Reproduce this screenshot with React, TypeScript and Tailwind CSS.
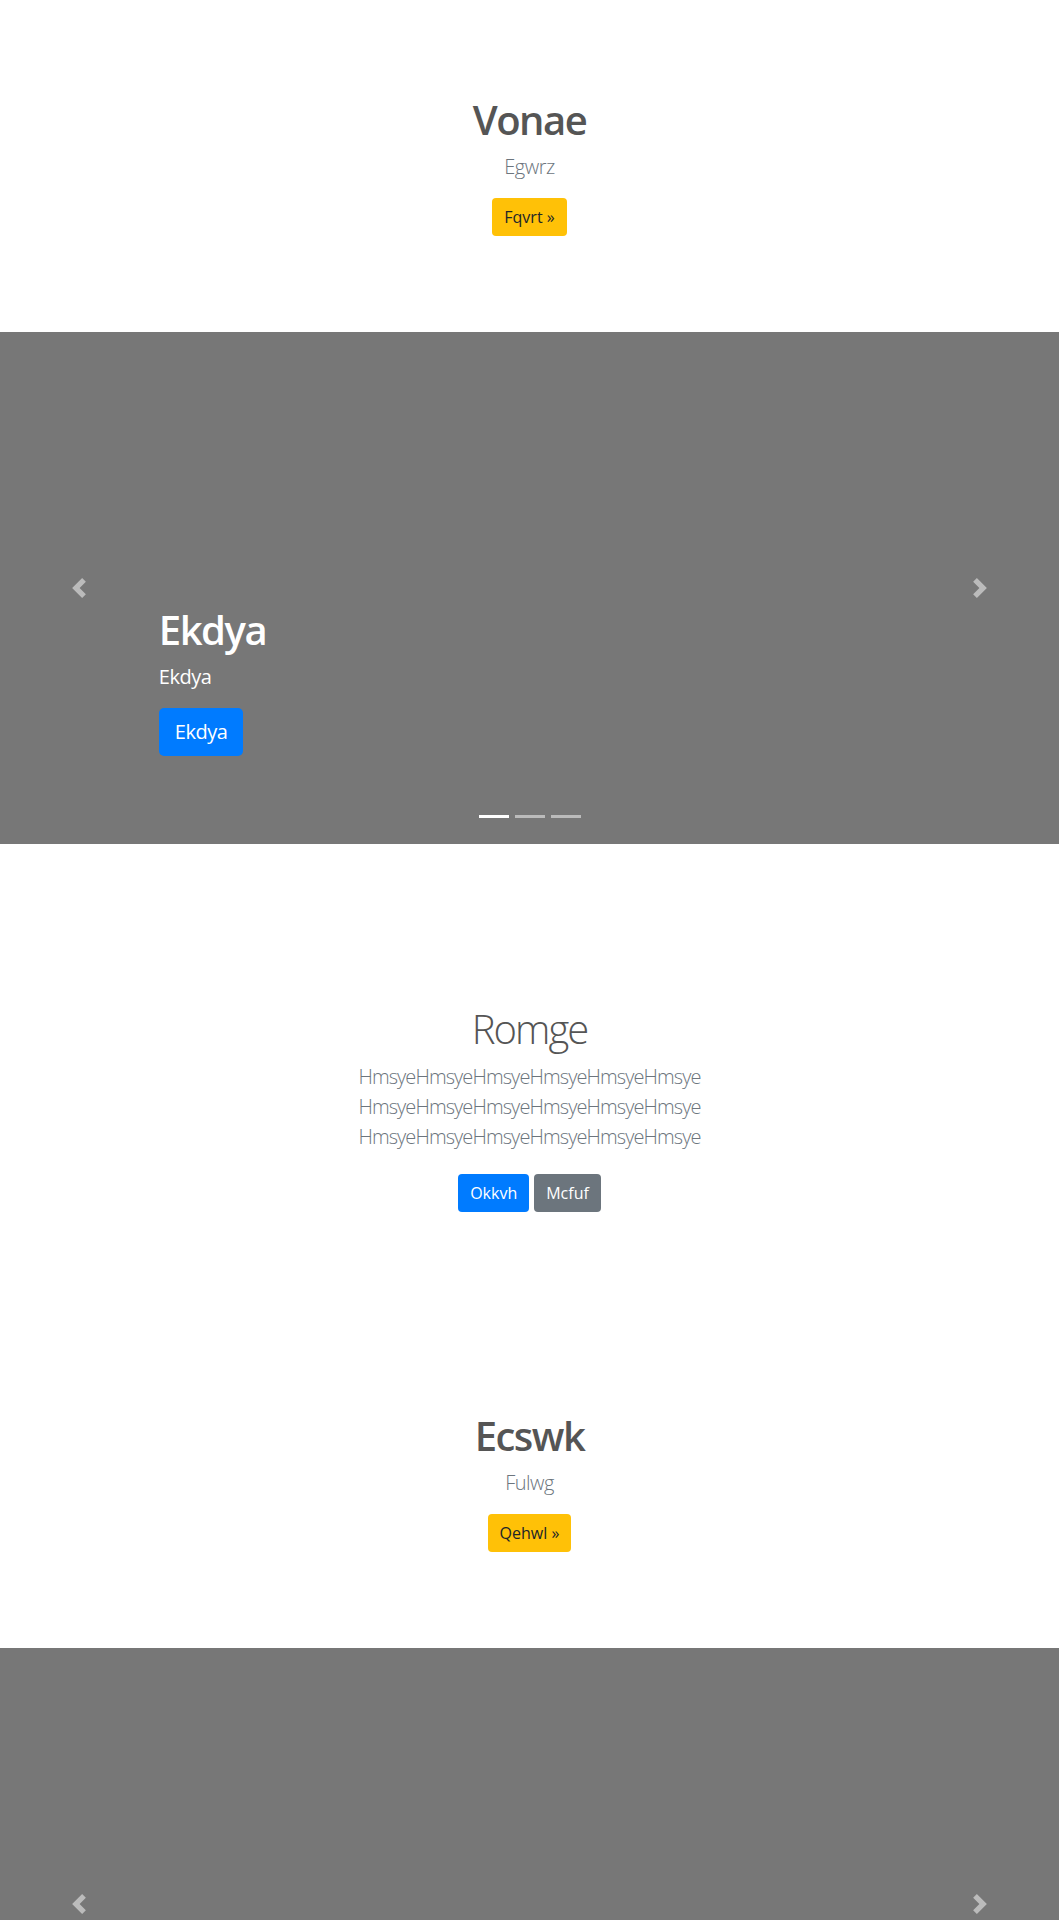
import React from 'react';

const font = { fontFamily: '"Open Sans", "Noto Sans", Arial, sans-serif' };

const PrevIcon = () => (
  <svg viewBox="0 0 8 8" className="w-5 h-5" fill="#fff">
    <path d="M5.25 0l-4 4 4 4 1.5-1.5L4.25 4l2.5-2.5L5.25 0z" />
  </svg>
);

const NextIcon = () => (
  <svg viewBox="0 0 8 8" className="w-5 h-5" fill="#fff">
    <path d="M2.75 0l-1.5 1.5L3.75 4l-2.5 2.5L2.75 8l4-4-4-4z" />
  </svg>
);

interface HeroProps {
  title: string;
  lead: string;
  action: string;
}

const Hero = ({ title, lead, action }: HeroProps) => (
  <section className="py-24 text-center">
    <h1 className="text-[40px] leading-[48px] font-semibold tracking-[-1.5px] text-[#555] mb-2">{title}</h1>
    <p className="text-[20px] leading-[30px] font-light tracking-[-0.5px] text-[#6c757d] mb-4">{lead}</p>
    <button className="h-[38px] px-3 rounded bg-[#ffc107] text-[#212529] text-base leading-6">
      {action} &raquo;
    </button>
  </section>
);

interface SlideProps {
  title?: string;
  text?: string;
  action?: string;
}

const Carousel = ({ title, text, action }: SlideProps) => (
  <section className="relative h-[512px] bg-[#777] overflow-hidden">
    {/* Caption */}
    {title && (
      <div className="absolute left-[15%] right-[15%] bottom-[52px] py-5 text-left text-white">
        <h1 className="text-[40px] leading-[48px] font-semibold tracking-[-1.5px] mb-2">{title}</h1>
        <p className="text-[20px] leading-[30px] tracking-[-0.5px] mb-4">{text}</p>
        <p className="mb-4">
          <button className="h-12 px-4 rounded-[5px] bg-[#007bff] text-white text-[20px] leading-[30px] tracking-[-0.5px]">
            {action}
          </button>
        </p>
      </div>
    )}

    {/* Controls */}
    <button className="absolute inset-y-0 left-0 w-[15%] flex items-center justify-center opacity-50">
      <PrevIcon />
    </button>
    <button className="absolute inset-y-0 right-0 w-[15%] flex items-center justify-center opacity-50">
      <NextIcon />
    </button>

    {/* Indicators */}
    <ol className="absolute bottom-0 inset-x-0 mx-[15%] mb-4 flex justify-center">
      <li className="w-[30px] h-[23px] mx-[3px] border-y-[10px] border-transparent bg-white bg-clip-padding" />
      <li className="w-[30px] h-[23px] mx-[3px] border-y-[10px] border-transparent bg-white bg-clip-padding opacity-50" />
      <li className="w-[30px] h-[23px] mx-[3px] border-y-[10px] border-transparent bg-white bg-clip-padding opacity-50" />
    </ol>
  </section>
);

export default function App() {
  const lines = ['HmsyeHmsyeHmsyeHmsyeHmsyeHmsye', 'HmsyeHmsyeHmsyeHmsyeHmsyeHmsye', 'HmsyeHmsyeHmsyeHmsyeHmsyeHmsye'];

  return (
    <div className="bg-white" style={font}>
      <Hero title="Vonae" lead="Egwrz" action="Fqvrt" />

      <Carousel title="Ekdya" text="Ekdya" action="Ekdya" />

      {/* Feature block */}
      <section className="pt-[161px] pb-[104px] text-center">
        <h1 className="text-[40px] leading-[48px] font-light tracking-[-2px] text-[#555] mb-[9px]">Romge</h1>
        <p className="text-[20px] leading-[30px] font-light tracking-[-0.9px] text-[#6c757d] mb-[22px]">
          {lines.map((l, i) => (
            <span key={i} className="block">{l}</span>
          ))}
        </p>
        <div className="flex justify-center gap-[5px]">
          <button className="h-[38px] px-3 rounded bg-[#007bff] text-white text-base leading-6">Okkvh</button>
          <button className="h-[38px] px-3 rounded bg-[#6c757d] text-white text-base leading-6">Mcfuf</button>
        </div>
      </section>

      <Hero title="Ecswk" lead="Fulwg" action="Qehwl" />

      <Carousel />
    </div>
  );
}
